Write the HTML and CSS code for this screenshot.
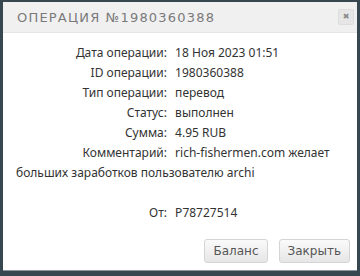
FILE: index.html
```html
<!DOCTYPE html>
<html lang="ru">
<head>
  <meta charset="UTF-8">
  <title>Операция</title>
  <link rel="stylesheet" href="styles.css">
</head>
<body>
  <div class="modal">
    <div class="modal-head">
      <span class="modal-title">Операция №1980360388</span>
      <span class="close">&#10006;</span>
    </div>
    <div class="modal-body">
      <div class="row"><span class="lbl">Дата операции:</span> 18 Ноя 2023 01:51</div>
      <div class="row"><span class="lbl">ID операции:</span> 1980360388</div>
      <div class="row"><span class="lbl">Тип операции:</span> перевод</div>
      <div class="row"><span class="lbl">Статус:</span> выполнен</div>
      <div class="row"><span class="lbl">Сумма:</span> 4.95 RUB</div>
      <div class="row"><span class="lbl">Комментарий:</span> rich-fishermen.com желает больших заработков пользователю archi</div>
      <div class="row empty"></div>
      <div class="row"><span class="lbl">От:</span> P78727514</div>
    </div>
    <div class="modal-foot">
      <button class="btn">Баланс</button>
      <button class="btn">Закрыть</button>
    </div>
  </div>
</body>
</html>
```
FILE: styles.css
```css
body { margin: 0; background: #37474f; height: 276px; overflow: hidden; }
.modal { margin: 2px 3px 0 3px; height: 268px; background: #fff; box-shadow: 0 1px 0 #8a9499; display: flex; flex-direction: column; }
.modal-head { height: 30px; background: #f0f0f0; border-bottom: 1px solid #e4e4e4; display: flex; align-items: center; justify-content: space-between; padding: 0 3px 0 14px; }
.modal-title { font-family: "DejaVu Sans", sans-serif; font-size: 13px; text-transform: uppercase; letter-spacing: 1.2px; color: #7a7a7a; }
.close { width: 14px; height: 14px; border: 1px solid #ddd; border-radius: 2px; background: #e6e6e6; color: #8a8a8a; font-size: 8px; line-height: 14px; text-align: center; font-family: "DejaVu Sans", sans-serif; }
.modal-body { padding: 10px 12px 0 13px; font-family: "Noto Sans", sans-serif; font-size: 12px; line-height: 20px; color: #333; }
.row.empty { height: 20px; }
.lbl { display: inline-block; width: 151px; text-align: right; margin-right: 5px; }
.modal-foot { display: flex; justify-content: flex-end; gap: 11px; padding: 16px 7px 0 0; }
.btn { font-family: "DejaVu Sans", sans-serif; font-size: 12px; color: #555; height: 24px; padding: 0 8px; border: 1px solid #d4d4d4; border-radius: 3px; background: linear-gradient(#fafafa, #e6e6e6); }
```
